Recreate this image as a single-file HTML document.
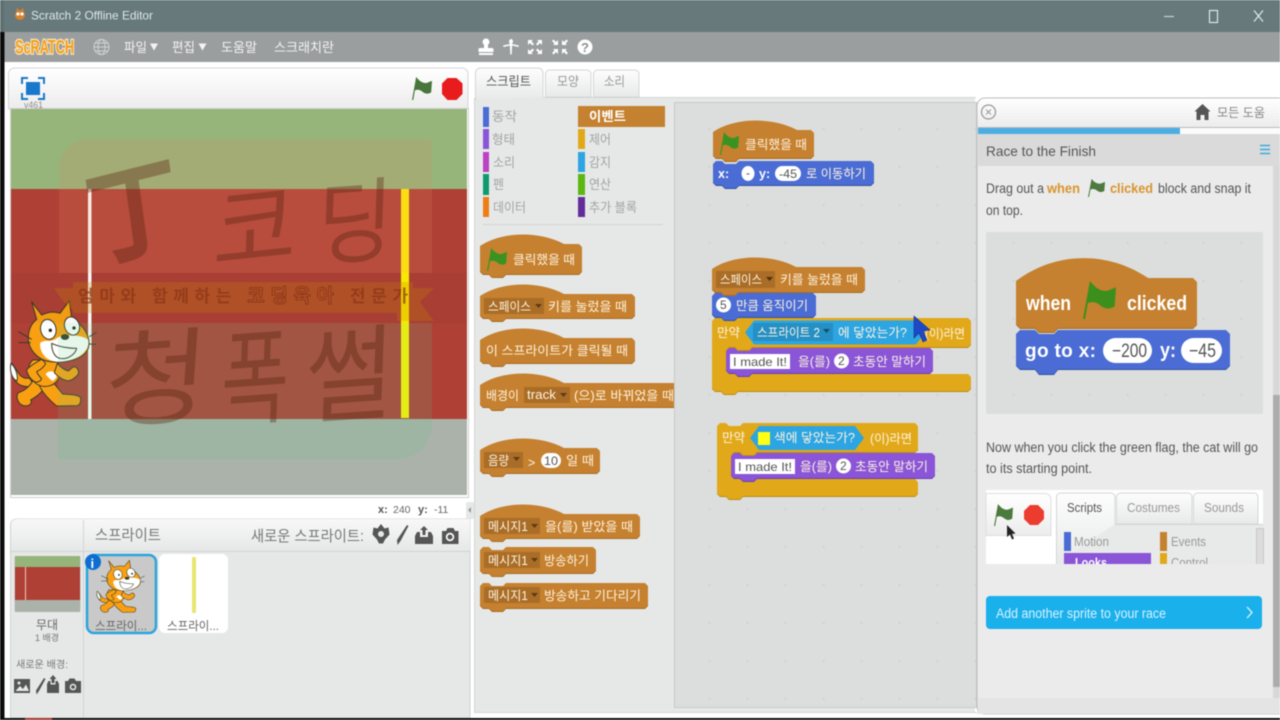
<!DOCTYPE html>
<html lang="ko">
<head>
<meta charset="utf-8">
<title>Scratch 2 Offline Editor</title>
<style>
html,body{margin:0;padding:0;width:1280px;height:720px;overflow:hidden;background:#fff}
svg{display:block;filter:blur(.45px)}
text{font-family:"Liberation Sans","Noto Sans CJK KR",sans-serif;dominant-baseline:auto}
.k{font-size:13px;fill:#666}
.b{font-size:12.5px;fill:#fff3df}
.c{font-size:13px;fill:#a3a3a3}
.h{font-size:13.5px;fill:#555}
.o{font-size:12px;fill:#555}
.bb{font-size:20px;font-weight:bold;fill:#fff}
.bi{font-size:19px;fill:#555}
</style>
</head>
<body>
<svg width="1280" height="720" viewBox="0 0 1280 720" xmlns="http://www.w3.org/2000/svg">
<defs>
<linearGradient id="hd" x1="0" y1="0" x2="0" y2="1"><stop offset="0" stop-color="#fff"/><stop offset="1" stop-color="#ececec"/></linearGradient>
<linearGradient id="hd2" x1="0" y1="0" x2="0" y2="1"><stop offset="0" stop-color="#f8f8f8"/><stop offset="1" stop-color="#e6e7e7"/></linearGradient>
<linearGradient id="tab" x1="0" y1="0" x2="0" y2="1"><stop offset="0" stop-color="#fdfdfd"/><stop offset="1" stop-color="#e8e9e9"/></linearGradient>
<pattern id="dots" x="690" y="110" width="38" height="38" patternUnits="userSpaceOnUse"><path d="M18 19h3M19.500 17.500v3" stroke="#d2d4d3" stroke-width="1"/></pattern>
<symbol id="flag" viewBox="0 0 24 24" preserveAspectRatio="none"><path d="M0 24L5 0C8 3 10 5 14 6C18 7 20 5 24 4L23 16C19 18 16 18 12 15C9 13 6 13 3.500 14L1.500 24Z"/></symbol>
<g id="cat" stroke="#3a3a2a" stroke-width="3" stroke-linejoin="round">
<path d="M35 250C30 270 35 300 60 315C75 322 95 322 100 312L88 294C72 298 60 290 50 270Z" fill="#f9a012"/>
<path d="M33 250C28 270 35 295 50 303C55 295 50 265 33 250Z" fill="#fff"/>
<path d="M100 300C90 318 75 332 55 338C46 350 54 372 70 377C88 380 98 370 92 360C112 348 130 336 136 312Z" fill="#f9a012"/>
<path d="M150 296L188 342C208 344 232 343 241 352C244 362 241 374 232 377L170 378C148 360 128 340 118 316Z" fill="#f9a012"/>
<path d="M98 240C78 260 84 292 110 312C132 326 168 320 178 290C183 270 178 250 168 240Z" fill="#f9a012"/>
<path d="M137 282C145 270 165 272 172 285C168 295 162 302 158 303C150 298 142 290 137 282Z" fill="#fff" stroke="none"/>
<path d="M172 250C182 262 192 270 205 273C212 268 218 260 225 260C236 266 238 278 233 285C222 297 212 304 200 302C186 298 174 290 163 278Z" fill="#f9a012"/>
<path d="M125 238C108 248 88 258 80 270C83 287 94 300 105 306C113 308 124 303 124 295C117 288 112 280 110 275C120 270 132 262 137 250Z" fill="#f9a012"/>
<path d="M95 65L125 105C145 95 165 95 180 100L208 62L215 115C250 135 275 170 265 205C250 240 195 250 150 245C110 240 85 205 85 175C85 150 95 130 110 118Z" fill="#f9a012"/>
<path d="M120 190C135 175 150 190 170 175C190 160 250 165 265 180C270 210 240 240 185 245C145 248 120 225 120 190Z" fill="#fff" stroke="none"/>
<ellipse cx="145" cy="148" rx="23" ry="30" transform="rotate(-12 145 148)" fill="#fff"/>
<ellipse cx="216" cy="138" rx="22" ry="28" transform="rotate(-20 216 138)" fill="#fff"/>
<circle cx="151" cy="151" r="5" fill="#222" stroke="none"/>
<circle cx="222" cy="144" r="5" fill="#222" stroke="none"/>
<ellipse cx="195" cy="171" rx="11" ry="7" fill="#3a3a2a"/>
<path d="M155 190C175 200 205 205 230 205C225 225 200 240 180 235C165 232 155 215 155 190Z" fill="#fff"/>
<path d="M55 155L95 178M55 188L92 188M268 170L290 157M268 192L288 193" fill="none"/>
</g>
</defs>

<!-- window chrome -->
<rect width="1280" height="720" fill="#fff"/>
<rect width="1280" height="32" fill="#67797b"/>
<rect y="32" width="1280" height="30" fill="#9b9e9f"/>
<rect x="0" y="32" width="4.500" height="688" fill="#0c0c0c"/>
<rect x="0" y="0" width="4" height="32" fill="#5f7072"/>
<circle cx="20" cy="15" r="5" fill="#d9822b"/><circle cx="18" cy="14" r="1.600" fill="#fff"/><circle cx="22" cy="14" r="1.600" fill="#fff"/><path d="M16 11l1-3 2 2zM24 11l-1-3-2 2z" fill="#d9822b"/>
<text x="31" y="19.500" font-size="12" fill="#dfe6e6" textLength="122" lengthAdjust="spacingAndGlyphs">Scratch 2 Offline Editor</text>
<path d="M1164 16.500h10" stroke="#c8d2d2" stroke-width="1.200"/>
<rect x="1209.500" y="10.500" width="8" height="12" fill="none" stroke="#e8eeee" stroke-width="1.100"/>
<path d="M1254 10.500l9 11M1263 10.500l-9 11" stroke="#e8eeee" stroke-width="1.100"/>

<!-- menu -->
<text x="15" y="53.500" font-size="19" font-weight="bold" fill="#f0a020" stroke="#fbe6bd" stroke-width="2.600" style="paint-order:stroke" textLength="59" lengthAdjust="spacingAndGlyphs">ScRATCH</text>
<g fill="none" stroke="#d0d2d3" stroke-width="1"><circle cx="101.500" cy="47" r="7.500"/><ellipse cx="101.500" cy="47" rx="3.500" ry="7.500"/><path d="M94 47h15M95 43h13M95 51h13"/></g>
<g font-size="13" fill="#f4f4f4">
<text x="124" y="52" textLength="23" lengthAdjust="spacingAndGlyphs">파일</text>
<text x="172" y="52" textLength="23" lengthAdjust="spacingAndGlyphs">편집</text>
<text x="221" y="52" textLength="36" lengthAdjust="spacingAndGlyphs">도움말</text>
<text x="274" y="52" textLength="60" lengthAdjust="spacingAndGlyphs">스크래치란</text>
</g>
<path d="M150 43.500h8l-4 7zM198.500 43.500h8l-4 7z" fill="#f4f4f4"/>
<g fill="#fff">
<path d="M486 38.500a3.500 3.500 0 0 1 2 6.300V48h4a1.500 1.500 0 0 1 1.500 1.500V52H478.500V49.500A1.500 1.500 0 0 1 480 48h4V44.800A3.500 3.500 0 0 1 486 38.500ZM479 53h14v2h-14Z"/>
<path d="M510.500 39h1.600v5l6.900 1.500-.7 1.500-6.200-1.500-.4 9h-1.400l-.4-9-6.200 1.500-.7-1.500 6.900-1.500Z"/>
<circle cx="511" cy="41.500" r="2"/>
<path d="M528 40h5l-1.500 1.500 2.500 2.500-1.500 1.500-2.500-2.500L528 45ZM542 40h-5l1.500 1.500-2.500 2.500 1.500 1.500 2.500-2.500L542 45ZM528 54h5l-1.500-1.500 2.500-2.500-1.500-1.500-2.500 2.500L528 49ZM542 54h-5l1.500-1.500-2.500-2.500 1.500-1.500 2.500 2.500L542 49Z"/>
<path d="M558 45h-5l1.500-1.500-2.500-2.500 1.500-1.500 2.500 2.500L558 40ZM562 45h5l-1.500-1.500 2.500-2.500-1.500-1.500-2.500 2.500L562 40ZM558 49h-5l1.500 1.500-2.500 2.500 1.500 1.500 2.500-2.500L558 54ZM562 49h5l-1.500 1.500 2.500 2.500-1.500 1.500-2.500-2.500L562 54Z"/>
<circle cx="585" cy="47" r="7.500"/>
</g>
<text x="581" y="52" font-size="13" font-weight="bold" fill="#8d9091">?</text>

<!-- stage -->
<path d="M8.500 109V74a6 6 0 0 1 6-6H462a6 6 0 0 1 6 6V109Z" fill="url(#hd)" stroke="#d6d6d6"/>
<g fill="none" stroke="#1a78c8" stroke-width="2"><path d="M22 84v-6h6M38 78h6v6M22 93v6h6M38 99h6v-6"/></g>
<rect x="26" y="82" width="14" height="13" fill="#1878cc"/>
<text x="24" y="108" font-size="9" fill="#8d8d8d" textLength="19" lengthAdjust="spacingAndGlyphs">v461</text>
<use href="#flag" x="412" y="77" width="20" height="23" fill="#47753a"/>
<path d="M447.500 78h9l6 5.500v10.500l-6 6h-9l-5.500-6V83.500Z" fill="#e81c1c"/>
<rect x="10.500" y="108.500" width="458" height="389" fill="#fff" stroke="#cfcfcf"/>
<rect x="11" y="109" width="456" height="80" fill="#96b57b"/>
<rect x="11" y="189" width="456" height="230" fill="#ae4036"/>
<rect x="11" y="419" width="456" height="76" fill="#abb2aa"/>
<rect x="88" y="189" width="3.500" height="230" fill="#fff"/>
<rect x="401" y="189" width="8" height="229" fill="#fff200"/>
<use href="#cat" transform="translate(0 280) scale(.3333)"/>
<!-- watermark -->
<path d="M59 273V168a29 29 0 0 1 29-29H432V273Z" fill="rgb(230,131,100)" fill-opacity=".19"/>
<rect x="11" y="273" width="456" height="50" fill="#000" opacity=".03"/>
<path d="M58 323H432V425a34 34 0 0 1-34 34H58Z" fill="rgb(95,197,132)" fill-opacity=".16"/>
<path d="M73 282H413V288H434L420 302L434 321H397V313H73V310L62 300L54 288H73Z" fill="rgb(200,130,0)" fill-opacity=".26"/>
<g font-family="'Noto Serif CJK SC','Noto Sans CJK KR',sans-serif" fill="#5a2410" fill-opacity=".38">
<text transform="translate(92 262) rotate(-14) skewX(-6)" font-size="105" font-weight="bold" textLength="96" lengthAdjust="spacingAndGlyphs">丁</text>
<text transform="translate(212 266) rotate(-6) skewX(-8)" font-size="92" textLength="84" lengthAdjust="spacingAndGlyphs">코</text>
<text transform="translate(316 258) rotate(-4) skewX(-6)" font-size="92" textLength="76" lengthAdjust="spacingAndGlyphs">딩</text>
<text transform="translate(102 420) rotate(-4) skewX(-8)" font-size="104" textLength="104" lengthAdjust="spacingAndGlyphs">청</text>
<text transform="translate(220 418) rotate(-4) skewX(-6)" font-size="104" textLength="68" lengthAdjust="spacingAndGlyphs">폭</text>
<text transform="translate(304 416) rotate(-4) skewX(-6)" font-size="104" textLength="88" lengthAdjust="spacingAndGlyphs">썰</text>
</g>
<text x="78" y="302" font-size="17" font-weight="bold" fill="#8a3418" fill-opacity=".72" textLength="330" lengthAdjust="spacing">엄마와 함께하는 <tspan fill="none" stroke="#8a3418" stroke-width=".8" font-size="19">코딩육아</tspan> 전문가</text>

<!-- coords -->
<text x="378" y="513" font-size="11" font-weight="bold" fill="#555">x:</text>
<text x="393" y="513" font-size="10.500" fill="#666">240</text>
<text x="418" y="513" font-size="11" font-weight="bold" fill="#555">y:</text>
<text x="434" y="513" font-size="10.500" fill="#666">-11</text>
<rect x="466" y="502" width="8" height="17" rx="2" fill="#e6e7e7"/>
<path d="M471 507v6l-3-3z" fill="#999"/>

<!-- sprites panel -->
<path d="M10.500 718V525a6 6 0 0 1 6-6H470V718Z" fill="#e6e8e8" stroke="#cfd1d1"/>
<path d="M11 551V525a6 6 0 0 1 6-6H470V551Z" fill="url(#hd2)"/>
<path d="M11 551.500H470" stroke="#d2d4d4"/><path d="M83.500 520V718" stroke="#d2d4d4"/>
<text x="95" y="540" font-size="15" fill="#777" textLength="66" lengthAdjust="spacingAndGlyphs">스프라이트</text>
<text x="251" y="541" font-size="15" fill="#777" textLength="113" lengthAdjust="spacingAndGlyphs">새로운 스프라이트:</text>
<g fill="#555">
<path d="M381 524l3.500 4.500 4-1 1 7-4.500 5-2 4h-4l-2-4-4.500-5 1-7 4 1Z"/>
<path d="M407 525l1.500 1-8 15-3 4-.5-5Z"/>
<path d="M424 526l4 4h-2.500v5h-3v-5H420ZM415 536l2-4h3v5h8v-5h3l2 4v8h-18Z"/>
<path d="M442 531h4l1.500-3h6l1.500 3h3.500v13h-16.500Z"/>
</g>
<circle cx="450" cy="537" r="4.200" fill="#fff"/><circle cx="450" cy="537" r="2.500" fill="#555"/>
<circle cx="381" cy="534" r="3" fill="#e6e8e8"/>

<rect x="14.500" y="556" width="66" height="56" rx="2" fill="#bfc1c1"/>
<rect x="15" y="556" width="65" height="11" fill="#96b57b"/>
<rect x="15" y="567" width="65" height="33" fill="#ae4036"/>
<rect x="15" y="600" width="65" height="12" fill="#abb2aa"/>
<rect x="25" y="567" width="1" height="33" fill="#f0c8c0"/>
<text x="36" y="629" font-size="12" fill="#666" textLength="22" lengthAdjust="spacingAndGlyphs">무대</text>
<text x="35" y="641" font-size="9" fill="#777" textLength="24" lengthAdjust="spacingAndGlyphs">1 배경</text>
<text x="16" y="668" font-size="10" fill="#777" textLength="52" lengthAdjust="spacingAndGlyphs">새로운 배경:</text>
<g fill="#555">
<path d="M14 679h16v14H14Z"/>
<path d="M44 678l1.500 1-6.500 12-2.500 3.500-.5-4Z"/>
<path d="M53 675l3.500 4h-2v4h-3v-4h-2ZM47 684l1.500-3h2v3.500h5V681h2l1.500 3v9H47Z"/>
<path d="M65 681h3l1.500-2.500h5L76 681h5v12H65Z"/>
</g>
<path d="M15.500 691l4.500-5 3 3 3-4.500 3 6.500Z" fill="#e6e8e8"/>
<circle cx="19" cy="683" r="1.500" fill="#e6e8e8"/>
<circle cx="73" cy="687" r="3.300" fill="#e6e8e8"/><circle cx="73" cy="687" r="1.800" fill="#555"/>

<rect x="87" y="555" width="69" height="78" rx="7" fill="#c9c9c9" stroke="#2aa5dc" stroke-width="2.500"/>
<use href="#cat" transform="translate(91 550) scale(.185 .165)"/>
<circle cx="93" cy="562" r="8" fill="#0d6ed1"/>
<text x="90.500" y="568" font-size="13" font-weight="bold" fill="#fff">i</text>
<text x="95" y="630" font-size="12" fill="#666" textLength="52" lengthAdjust="spacingAndGlyphs">스프라이...</text>
<rect x="159" y="554" width="69" height="79" rx="6" fill="#fff"/>
<rect x="192" y="557" width="4" height="56" rx="1" fill="#e9e66f"/>
<text x="167" y="630" font-size="12" fill="#666" textLength="52" lengthAdjust="spacingAndGlyphs">스프라이...</text>

<!-- tabs + palette -->
<path d="M475 712V97H975V712Z" fill="#e6e8e8"/>
<path d="M593.500 97V74a4 4 0 0 1 4-4H635a4 4 0 0 1 4 4V97Z" fill="url(#tab)" stroke="#d4d6d6"/>
<path d="M545.500 97V74a4 4 0 0 1 4-4H587a4 4 0 0 1 4 4V97Z" fill="url(#tab)" stroke="#d4d6d6"/>
<path d="M475.500 100V73a5 5 0 0 1 5-5H538a5 5 0 0 1 5 5V97" fill="url(#tab)" stroke="#d4d6d6"/>
<path d="M543 97.500H976" stroke="#d4d6d6"/>
<path d="M474.500 98V712.500H977" fill="none" stroke="#d4d6d6"/>
<text x="486" y="86" font-size="13" fill="#555" textLength="45" lengthAdjust="spacingAndGlyphs">스크립트</text>
<text x="557" y="86" font-size="13" fill="#999" textLength="22" lengthAdjust="spacingAndGlyphs">모양</text>
<text x="604" y="86" font-size="13" fill="#999" textLength="21" lengthAdjust="spacingAndGlyphs">소리</text>

<rect x="483" y="107" width="6" height="20" fill="#4a6cd4"/>
<rect x="483" y="129" width="6" height="20" fill="#8a55d7"/>
<rect x="483" y="152" width="6" height="20" fill="#bb42c3"/>
<rect x="483" y="174" width="6" height="21" fill="#0e9a6c"/>
<rect x="483" y="197" width="6" height="20" fill="#ee7d16"/>
<rect x="578" y="106" width="87" height="21" fill="#c4812f"/>
<rect x="578" y="129" width="7" height="20" fill="#e1a91a"/>
<rect x="578" y="152" width="7" height="20" fill="#2ca5e2"/>
<rect x="578" y="174" width="7" height="21" fill="#5cb712"/>
<rect x="578" y="197" width="7" height="20" fill="#632d99"/>
<text class="c" x="492" y="121" textLength="25" lengthAdjust="spacingAndGlyphs">동작</text>
<text class="c" x="492" y="144" textLength="23" lengthAdjust="spacingAndGlyphs">형태</text>
<text class="c" x="493" y="167" textLength="22" lengthAdjust="spacingAndGlyphs">소리</text>
<text class="c" x="493" y="189" textLength="11" lengthAdjust="spacingAndGlyphs">펜</text>
<text class="c" x="493" y="212" textLength="33" lengthAdjust="spacingAndGlyphs">데이터</text>
<text x="589" y="121" font-size="13" font-weight="bold" fill="#fff" textLength="37" lengthAdjust="spacingAndGlyphs">이벤트</text>
<text class="c" x="589" y="144" textLength="22" lengthAdjust="spacingAndGlyphs">제어</text>
<text class="c" x="589" y="167" textLength="22" lengthAdjust="spacingAndGlyphs">감지</text>
<text class="c" x="589" y="189" textLength="22" lengthAdjust="spacingAndGlyphs">연산</text>
<text class="c" x="589" y="212" textLength="48" lengthAdjust="spacingAndGlyphs">추가 블록</text>
<path d="M483 224.500H663" stroke="#d2d4d4"/>

<!-- palette blocks -->
<g fill="#c5812f" style="filter:drop-shadow(0 1px 0 #a56a24)">
<path d="M480 246c22-15 60-15 84-2H579l3 3V271l-3 3H506l-3 3h-11l-3-3H483l-3-3Z"/>
<path d="M480 296c22-15 60-15 84-2H632l3 3V315l-3 3H506l-3 3h-11l-3-3H483l-3-3Z"/>
<path d="M480 340c22-15 60-15 84-2H632l3 3V360l-3 3H506l-3 3h-11l-3-3H483l-3-3Z"/>
<path d="M480 385c22-15 60-15 84-2H680V407H506l-3 3h-11l-3-3H483l-3-3Z"/>
<path d="M480 450c22-15 60-15 84-2H597l3 3V470l-3 3H506l-3 3h-11l-3-3H483l-3-3Z"/>
<path d="M480 516c22-15 60-15 84-2H637l3 3V535l-3 3H506l-3 3h-11l-3-3H483l-3-3Z"/>
<path d="M483 547h6l3 3h11l3-3H593l3 3V570l-3 3H506l-3 3h-11l-3-3H483l-3-3V550Z"/>
<path d="M483 583h6l3 3h11l3-3H645l3 3V605l-3 3H506l-3 3h-11l-3-3H483l-3-3V586Z"/>
</g>
<use href="#flag" x="487" y="248" width="20" height="23" fill="#3a9320"/>
<text class="b" x="513" y="264" textLength="62" lengthAdjust="spacingAndGlyphs">클릭했을 때</text>
<rect x="484" y="298" width="60" height="16" fill="#a96d27"/>
<path d="M535 304h7l-3.500 4z" fill="#5e3c15"/>
<text class="b" x="488" y="311" textLength="43" lengthAdjust="spacingAndGlyphs">스페이스</text>
<text class="b" x="548" y="311" textLength="79" lengthAdjust="spacingAndGlyphs">키를 눌렀을 때</text>
<text class="b" x="486" y="355" textLength="142" lengthAdjust="spacingAndGlyphs">이 스프라이트가 클릭될 때</text>
<text class="b" x="486" y="400" textLength="33" lengthAdjust="spacingAndGlyphs">배경이</text>
<rect x="524" y="387" width="46" height="16" fill="#a96d27"/>
<path d="M560 393h7l-3.500 4z" fill="#5e3c15"/>
<text class="b" x="527" y="399" textLength="29" lengthAdjust="spacingAndGlyphs">track</text>
<text class="b" x="574" y="400" textLength="100" lengthAdjust="spacingAndGlyphs">(으)로 바뀌었을 때</text>
<rect x="484" y="452" width="39" height="16" fill="#a96d27"/>
<path d="M513 457h7l-3.500 4z" fill="#5e3c15"/>
<text class="b" x="488" y="465" textLength="21" lengthAdjust="spacingAndGlyphs">음량</text>
<text class="b" x="528" y="467">&gt;</text>
<rect x="541" y="453" width="20" height="15" rx="7.500" fill="#fff"/>
<text class="o" x="544" y="465" textLength="14" lengthAdjust="spacingAndGlyphs">10</text>
<text class="b" x="566" y="465" textLength="28" lengthAdjust="spacingAndGlyphs">일 때</text>
<rect x="484" y="518" width="56" height="16" fill="#a96d27"/>
<path d="M531 524h7l-3.500 4z" fill="#5e3c15"/>
<text class="b" x="488" y="531" textLength="40" lengthAdjust="spacingAndGlyphs">메시지1</text>
<text class="b" x="545" y="531" textLength="88" lengthAdjust="spacingAndGlyphs">을(를) 받았을 때</text>
<rect x="484" y="552" width="56" height="16" fill="#a96d27"/>
<path d="M531 558h7l-3.500 4z" fill="#5e3c15"/>
<text class="b" x="488" y="565" textLength="40" lengthAdjust="spacingAndGlyphs">메시지1</text>
<text class="b" x="544" y="565" textLength="45" lengthAdjust="spacingAndGlyphs">방송하기</text>
<rect x="484" y="587" width="56" height="16" fill="#a96d27"/>
<path d="M531 593h7l-3.500 4z" fill="#5e3c15"/>
<text class="b" x="488" y="600" textLength="40" lengthAdjust="spacingAndGlyphs">메시지1</text>
<text class="b" x="544" y="600" textLength="97" lengthAdjust="spacingAndGlyphs">방송하고 기다리기</text>

<!-- script area -->
<rect x="674.500" y="102.500" width="302" height="605" fill="#dcdedd" stroke="#c8cac9"/>
<rect x="675" y="103" width="301" height="604" fill="url(#dots)"/>

<g style="filter:drop-shadow(0 1px 0 #a56a24)" fill="#c5812f">
<path d="M713 132c22-15 60-15 84-2H811l3 3V155l-3 3H739l-3 3h-11l-3-3H716l-3-3Z"/>
<path d="M712 269c22-15 60-15 84-2H862l3 3V289l-3 3H738l-3 3h-11l-3-3H715l-3-3Z"/>
</g>
<g style="filter:drop-shadow(0 1px 0 #33509f)" fill="#4a6cd4">
<path d="M716 161h6l3 3h11l3-3H871l3 3V182l-3 3H739l-3 3h-11l-3-3H716l-3-3V164Z"/>
<path d="M715 293h6l3 3h11l3-3H813l3 3V314l-3 3H738l-3 3h-11l-3-3H715l-3-3V296Z"/>
</g>
<use href="#flag" x="720" y="132" width="19" height="23" fill="#3a9320"/>
<text class="b" x="745" y="149" textLength="62" lengthAdjust="spacingAndGlyphs">클릭했을 때</text>
<text x="718" y="178" font-size="12.500" font-weight="bold" fill="#fff">x:</text>
<ellipse cx="748" cy="173.500" rx="6.500" ry="7.500" fill="#fff"/>
<text class="o" x="746" y="177">-</text>
<text x="759" y="178" font-size="12.500" font-weight="bold" fill="#fff">y:</text>
<rect x="775" y="166" width="26" height="15" rx="7.500" fill="#fff"/>
<text class="o" x="779" y="178" textLength="18" lengthAdjust="spacingAndGlyphs">-45</text>
<text class="b" x="806" y="178" textLength="60" lengthAdjust="spacingAndGlyphs">로 이동하기</text>

<rect x="716" y="271" width="59" height="17" fill="#a96d27"/>
<path d="M766 277h7l-3.500 4z" fill="#4e3212"/>
<text class="b" x="720" y="284" textLength="42" lengthAdjust="spacingAndGlyphs">스페이스</text>
<text class="b" x="780" y="284" textLength="78" lengthAdjust="spacingAndGlyphs">키를 눌렀을 때</text>
<circle cx="723.500" cy="305" r="7.500" fill="#fff"/>
<text class="o" x="720" y="309">5</text>
<text class="b" x="736" y="310" textLength="72" lengthAdjust="spacingAndGlyphs">만큼 움직이기</text>

<g style="filter:drop-shadow(0 1px 0 #b98a14)" fill="#e1a91a">
<path d="M715 318h6l3 3h11l3-3H968l3 3V344l-3 3H752l-3 3h-11l-3-3H729l-3 3V371l3 3H968l3 3V388l-3 3H738l-3 3h-11l-3-3H715l-3-3V321Z"/>
<path d="M720 423h6l3 3h11l3-3H915l3 3V449l-3 3H757l-3 3h-11l-3-3H734l-3 3V476l3 3H915l3 3V493l-3 3H743l-3 3h-11l-3-3H720l-3-3V426Z"/>
</g>
<g style="filter:drop-shadow(0 1px 0 #6a3fb0)" fill="#8a55d7">
<path d="M729 348h6l3 3h11l3-3H930l3 3V370l-3 3H752l-3 3h-11l-3-3H729l-3-3V351Z"/>
<path d="M734 453h6l3 3h11l3-3H932l3 3V475l-3 3H757l-3 3h-11l-3-3H734l-3-3V456Z"/>
</g>
<text class="b" x="717" y="337" textLength="23" lengthAdjust="spacingAndGlyphs">만약</text>
<path d="M745 332.500l9-12H916l9 12-9 12H754Z" fill="#2ca5e2"/>
<rect x="753" y="323" width="80" height="18" fill="#2590c5"/>
<path d="M823 329h7l-3.500 4z" fill="#12506e"/>
<text class="b" x="757" y="337" textLength="63" lengthAdjust="spacingAndGlyphs">스프라이트 2</text>
<text class="b" x="838" y="337" textLength="69" lengthAdjust="spacingAndGlyphs">에 닿았는가?</text>
<text class="b" x="925" y="338" textLength="40" lengthAdjust="spacingAndGlyphs">(이)라면</text>
<rect x="730" y="354" width="60" height="15" fill="#fff"/>
<text x="733" y="366" font-size="12" fill="#555" textLength="54" lengthAdjust="spacingAndGlyphs">I made It!</text>
<text class="b" x="798" y="366" textLength="32" lengthAdjust="spacingAndGlyphs">을(를)</text>
<circle cx="841.500" cy="361" r="7.500" fill="#fff"/>
<text class="o" x="838" y="365">2</text>
<text class="b" x="853" y="366" textLength="73" lengthAdjust="spacingAndGlyphs">초동안 말하기</text>

<text class="b" x="722" y="442" textLength="23" lengthAdjust="spacingAndGlyphs">만약</text>
<path d="M750 438l9-12H855l9 12-9 12H759Z" fill="#2ca5e2"/>
<rect x="758" y="432" width="12" height="13" fill="#ffff14"/>
<text class="b" x="774" y="442" textLength="81" lengthAdjust="spacingAndGlyphs">색에 닿았는가?</text>
<text class="b" x="870" y="443" textLength="42" lengthAdjust="spacingAndGlyphs">(이)라면</text>
<rect x="735" y="459" width="60" height="15" fill="#fff"/>
<text x="738" y="471" font-size="12" fill="#555" textLength="54" lengthAdjust="spacingAndGlyphs">I made It!</text>
<text class="b" x="800" y="471" textLength="32" lengthAdjust="spacingAndGlyphs">을(를)</text>
<circle cx="843.500" cy="466" r="7.500" fill="#fff"/>
<text class="o" x="840" y="470">2</text>
<text class="b" x="855" y="471" textLength="73" lengthAdjust="spacingAndGlyphs">초동안 말하기</text>

<path d="M914 316V338L919 333L923 342L927 340L923 331L930 330Z" fill="#1f48c8" stroke="#16307f" stroke-width=".6"/>

<!-- help panel -->
<path d="M977 714V106a8 8 0 0 1 8-8H1280V714Z" fill="#ebebeb"/>
<path d="M977 127V106a8 8 0 0 1 8-8H1280V127Z" fill="url(#hd)"/>
<path d="M1280 98H985a8 8 0 0 0-8 8V706a8 8 0 0 0 8 8H1280" fill="none" stroke="#bdbdbd"/>
<circle cx="988.500" cy="112" r="7" fill="none" stroke="#9a9a9a" stroke-width="1.300"/>
<path d="M986 109.500l5 5M991 109.500l-5 5" stroke="#9a9a9a"/>
<path d="M1202.500 104l8 7.500h-2V120h-4v-5h-4v5h-4v-8.500h-2Z" fill="#555"/>
<text x="1217" y="117" font-size="12.500" fill="#888" textLength="48" lengthAdjust="spacingAndGlyphs">모든 도움</text>
<path d="M978 127.500H1280" stroke="#bbb"/>
<rect x="978" y="128" width="302" height="6" fill="#fbfbfb"/>
<rect x="978" y="128" width="202" height="6" fill="#4aaee3"/>
<rect x="978" y="134" width="302" height="32" fill="#dadada"/>
<text x="986" y="156" font-size="14" fill="#555" textLength="110" lengthAdjust="spacingAndGlyphs">Race to the Finish</text>
<path d="M1260 145.500h10M1260 149.500h10M1260 153.500h10" stroke="#3fa9e0" stroke-width="1.600"/>
<rect x="1273" y="166" width="7" height="532" fill="#d8d8d8"/>
<rect x="1273" y="395" width="7" height="292" fill="#acacac"/>
<rect x="978" y="698" width="302" height="16" fill="#e4e4e4"/>

<text class="h" x="986" y="193" textLength="58" lengthAdjust="spacingAndGlyphs">Drag out a</text>
<text class="h" x="1047" y="193" style="fill:#d8952f;font-weight:bold" textLength="33" lengthAdjust="spacingAndGlyphs">when</text>
<use href="#flag" x="1088" y="179" width="17" height="18" fill="#4c7a3f"/>
<text class="h" x="1110" y="193" style="fill:#d8952f;font-weight:bold" textLength="43" lengthAdjust="spacingAndGlyphs">clicked</text>
<text class="h" x="1158" y="193" textLength="93" lengthAdjust="spacingAndGlyphs">block and snap it</text>
<text class="h" x="986" y="215" textLength="37" lengthAdjust="spacingAndGlyphs">on top.</text>

<rect x="986" y="232" width="277" height="182" fill="#dcdedd"/>
<rect x="986" y="232" width="277" height="182" fill="url(#dots)"/>
<path d="M1016 281c40-30 92-30 132-3H1193l4 4V324l-4 4H1058l-4 4h-15l-4-4H1020l-4-4Z" fill="#c5812f" style="filter:drop-shadow(0 1px 0 #a56a24)"/>
<path d="M1020 330h15l4 4h15l4-4H1226l4 4V365l-4 4H1058l-4 5h-15l-4-5H1020l-4-4V334Z" fill="#4a6cd4" style="filter:drop-shadow(0 1px 0 #33509f)"/>
<text class="bb" x="1026" y="310" textLength="45" lengthAdjust="spacingAndGlyphs">when</text>
<use href="#flag" x="1083" y="281" width="33" height="38" fill="#3c8f1c"/>
<text class="bb" x="1127" y="310" textLength="60" lengthAdjust="spacingAndGlyphs">clicked</text>
<text x="1025" y="357" font-size="19" font-weight="bold" fill="#fff" textLength="71" lengthAdjust="spacing">go to x:</text>
<rect x="1103" y="338" width="49" height="25" rx="12.500" fill="#fff"/>
<text class="bi" x="1112" y="357" textLength="35" lengthAdjust="spacingAndGlyphs">−200</text>
<text class="bb" x="1160" y="357" textLength="16" lengthAdjust="spacingAndGlyphs">y:</text>
<rect x="1181" y="338" width="41" height="25" rx="12.500" fill="#fff"/>
<text class="bi" x="1189" y="357" textLength="27" lengthAdjust="spacingAndGlyphs">−45</text>

<text class="h" x="986" y="452" textLength="272" lengthAdjust="spacingAndGlyphs">Now when you click the green flag, the cat will go</text>
<text class="h" x="986" y="473" textLength="106" lengthAdjust="spacingAndGlyphs">to its starting point.</text>

<rect x="986" y="490" width="277" height="74" fill="#fff"/>
<path d="M986 535.500V493.500H1045a6 6 0 0 1 6 6V535.500Z" fill="url(#hd)" stroke="#dedede"/>
<rect x="986" y="536" width="65" height="28" fill="#fff"/>
<use href="#flag" x="994" y="504" width="19" height="22" fill="#4a7a3c"/>
<path d="M1030 505h8l6 6v8l-6 6h-8l-6-6v-8Z" fill="#ec3b2f"/>
<path d="M1007 525v12l3-2.500 2 5 2-1-2-4.500 3.500-.5Z" fill="#222"/>
<rect x="1056" y="524" width="207" height="40" fill="#e8e9e9"/>
<path d="M1193.500 524V497a4 4 0 0 1 4-4H1254a4 4 0 0 1 4 4V524Z" fill="url(#tab)" stroke="#d4d6d6"/>
<path d="M1116.500 524V497a4 4 0 0 1 4-4H1188a4 4 0 0 1 4 4V524Z" fill="url(#tab)" stroke="#d4d6d6"/>
<path d="M1056.500 564V497a4 4 0 0 1 4-4H1111a4 4 0 0 1 4 4V524" fill="url(#tab)" stroke="#d4d6d6"/>
<path d="M1115 524.500H1263" stroke="#d4d6d6"/>
<text x="1067" y="512" font-size="12.500" fill="#555" textLength="35" lengthAdjust="spacingAndGlyphs">Scripts</text>
<text x="1127" y="512" font-size="12.500" fill="#999" textLength="53" lengthAdjust="spacingAndGlyphs">Costumes</text>
<text x="1204" y="512" font-size="12.500" fill="#999" textLength="40" lengthAdjust="spacingAndGlyphs">Sounds</text>
<rect x="1064" y="532" width="7" height="19" fill="#4a6cd4"/>
<text x="1074" y="546" font-size="12.500" fill="#999" textLength="35" lengthAdjust="spacingAndGlyphs">Motion</text>
<rect x="1160" y="532" width="7" height="19" fill="#c4812f"/>
<text x="1171" y="546" font-size="12.500" fill="#999" textLength="35" lengthAdjust="spacingAndGlyphs">Events</text>
<rect x="1064" y="553" width="87" height="11" fill="#8a55d7"/>
<text x="1075" y="567" font-size="12.500" font-weight="bold" fill="#fff" textLength="32" lengthAdjust="spacingAndGlyphs">Looks</text>
<rect x="1160" y="553" width="7" height="11" fill="#e1a91a"/>
<text x="1171" y="567" font-size="12.500" fill="#999" textLength="37" lengthAdjust="spacingAndGlyphs">Control</text>
<rect x="1256.500" y="528.500" width="7" height="36" fill="#dcdcdc" stroke="#c8c8c8"/>
<rect x="986" y="564" width="286" height="30" fill="#ebebeb"/>

<rect x="986" y="596" width="276" height="33" rx="4" fill="#1ab0ec"/>
<text x="996" y="618" font-size="13.500" fill="#d8f3ff" textLength="170" lengthAdjust="spacingAndGlyphs">Add another sprite to your race</text>
<path d="M1247 607l5 5.500-5 5.500" fill="none" stroke="#e2f6ff" stroke-width="1.300"/>

<!-- bottom edge -->
<rect x="0" y="718" width="1280" height="2" fill="#0c0c0c"/>
<rect x="25" y="718" width="27" height="2" fill="#a33a30"/>
</svg>
</body>
</html>
